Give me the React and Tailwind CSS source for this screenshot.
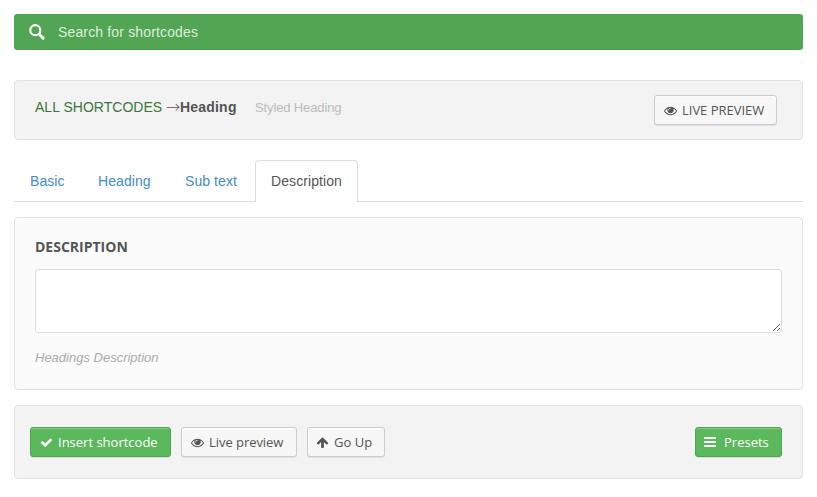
import React from 'react';

const paths = {
  eye: 'M1664 960q-152-236-381-353 61 104 61 225 0 185-131.5 316.5t-316.5 131.5-316.5-131.5-131.5-316.5q0-121 61-225-229 117-381 353 133 205 333.5 326.5t434.5 121.5 434.5-121.5 333.5-326.5zm-720-384q0-20-14-34t-34-14q-125 0-214.5 89.5t-89.5 214.5q0 20 14 34t34 14 34-14 14-34q0-86 61-147t147-61q20 0 34-14t14-34zm848 384q0 34-20 69-140 230-376.5 368.5t-499.5 138.5-499.5-139-376.5-368q-20-35-20-69t20-69q140-229 376.5-368t499.5-139 499.5 139 376.5 368q20 35 20 69z',
  check: 'M1671 566q0 40-28 68l-724 724-136 136q-28 28-68 28t-68-28l-136-136-362-362q-28-28-28-68t28-68l136-136q28-28 68-28t68 28l294 295 656-657q28-28 68-28t68 28l136 136q28 28 28 68z',
  arrowUp: 'M1675 971q0 51-37 90l-75 75q-38 38-91 38-54 0-90-38l-294-293v704q0 52-37.5 84.5t-90.5 32.5h-128q-53 0-90.5-32.5t-37.5-84.5v-704l-294 293q-36 38-90 38t-90-38l-75-75q-38-38-38-90 0-53 38-91l651-651q35-37 90-37 54 0 91 37l651 651q37 39 37 91z',
  bars: 'M1664 1344v128q0 26-19 45t-45 19h-1408q-26 0-45-19t-19-45v-128q0-26 19-45t45-19h1408q26 0 45 19t19 45zm0-512v128q0 26-19 45t-45 19h-1408q-26 0-45-19t-19-45v-128q0-26 19-45t45-19h1408q26 0 45 19t19 45zm0-512v128q0 26-19 45t-45 19h-1408q-26 0-45-19t-19-45v-128q0-26 19-45t45-19h1408q26 0 45 19t19 45z',
};

function Icon({ name, className }) {
  return (
    <svg viewBox="0 0 1792 1792" fill="currentColor" className={`shrink-0 overflow-visible ${className}`} aria-hidden="true">
      <path d={paths[name]} />
    </svg>
  );
}

function SearchIcon() {
  return (
    <svg viewBox="0 0 16 16" fill="none" stroke="currentColor" className="mr-[13px] size-4 shrink-0" aria-hidden="true">
      <circle cx="6.3" cy="6.2" r="5" strokeWidth="2.2" />
      <path d="M10.2 10.2l3.9 3.9" strokeWidth="2.9" strokeLinecap="round" />
    </svg>
  );
}

function Button({ primary, icon, iconClass, className, children }) {
  const tone = primary
    ? 'border-[#4ca64c] bg-[#5cb85c] text-white shadow-[inset_0_1px_0_#85ca85,0_1px_0_rgba(0,0,0,0.08)]'
    : 'border-[#cccccc] bg-[#f7f7f7] text-[#555555] shadow-[inset_0_1px_0_#ffffff,0_1px_0_rgba(0,0,0,0.08)]';
  return (
    <button
      type="button"
      className={`flex h-[30px] items-center whitespace-nowrap rounded-[3px] border font-['Open_Sans',sans-serif] text-[13px] leading-[28px] ${tone} ${className}`}
    >
      <Icon name={icon} className={iconClass} />
      <span>{children}</span>
    </button>
  );
}

const tabs = [
  { label: 'Basic', width: 'w-[66px]' },
  { label: 'Heading', width: 'w-[85px]' },
  { label: 'Sub text', width: 'w-[86px]' },
];

export default function App() {
  return (
    <main className="flex h-[497px] w-[817px] flex-col bg-white px-[14px] pt-[14px] font-['Liberation_Sans',Arial,sans-serif] text-[14px] leading-5 text-[#555555]">
      <div className="flex h-9 shrink-0 items-center rounded-[3px] bg-[#52a552] pl-[15px] text-white">
        <SearchIcon />
        <span className="tracking-[0.15px] text-[#dceddc]">Search for shortcodes</span>
      </div>

      <header className="mt-[30px] flex h-[60px] shrink-0 items-start rounded-[4px] border border-[#e1e1e1] bg-[#f3f3f3] pl-5 pr-[25px] pt-[14px]">
        <div className="flex pt-[2px]">
          <span className="w-[145px] whitespace-pre tracking-[0.03px] text-[#3c763d]">ALL SHORTCODES <span className="font-['Noto_Sans_CJK_JP',sans-serif] leading-none font-light text-[#555555]">→</span></span>
          <strong className="w-[57px] tracking-[0.2px]">Heading</strong>
          <span className="ml-[18px] pt-px text-[13px] tracking-[-0.13px] text-[#bbbbbb]">Styled Heading</span>
        </div>
        <Button icon="eye" iconClass="mr-[5px] size-[13px]" className="ml-auto w-[123px] pl-[9px] tracking-[-0.02px]">LIVE PREVIEW</Button>
      </header>

      <nav className="mt-5 flex h-[42px] shrink-0 border-b border-[#dddddd]">
        {tabs.map((tab) => (
          <a key={tab.label} className={`mr-[2px] pl-4 pt-[11px] tracking-[0.08px] text-[#428bca] ${tab.width}`}>
            {tab.label}
          </a>
        ))}
        <a className="-mb-px ml-[-2px] w-[103px] rounded-t-[4px] border border-b-0 border-[#dddddd] bg-white pl-[15px] pt-[10px] tracking-[0.08px]">Description</a>
      </nav>

      <section className="mt-[15px] h-[173px] shrink-0 rounded-[4px] border border-[#e1e1e1] bg-[#fbfbfb] px-5 pt-[19px]">
        <h2 className="font-['Open_Sans',sans-serif] text-[14px] font-bold leading-5">DESCRIPTION</h2>
        <textarea className="mt-3 block h-16 w-full resize rounded-[3px] border border-[#dddddd] bg-white outline-none" />
        <p className="mt-[15px] text-[13px] italic leading-5 text-[#aaaaaa]">Headings Description</p>
      </section>

      <footer className="mt-[15px] flex h-[74px] shrink-0 items-start gap-[10px] rounded-[4px] border border-[#e1e1e1] bg-[#f3f3f3] pl-[15px] pr-5 pt-[21px]">
        <Button primary icon="check" iconClass="mr-[5px] size-[13px]" className="w-[141px] pl-[9px]">Insert shortcode</Button>
        <Button icon="eye" iconClass="mr-[5px] size-[13px]" className="w-[116px] pl-[9px] tracking-[-0.05px]">Live preview</Button>
        <Button icon="arrowUp" iconClass="mr-[5px] size-[13px]" className="w-[78px] pl-[8px]">Go Up</Button>
        <Button primary icon="bars" iconClass="mr-[7px] size-[14px]" className="ml-auto w-[87px] pl-[7px]">Presets</Button>
      </footer>
    </main>
  );
}
